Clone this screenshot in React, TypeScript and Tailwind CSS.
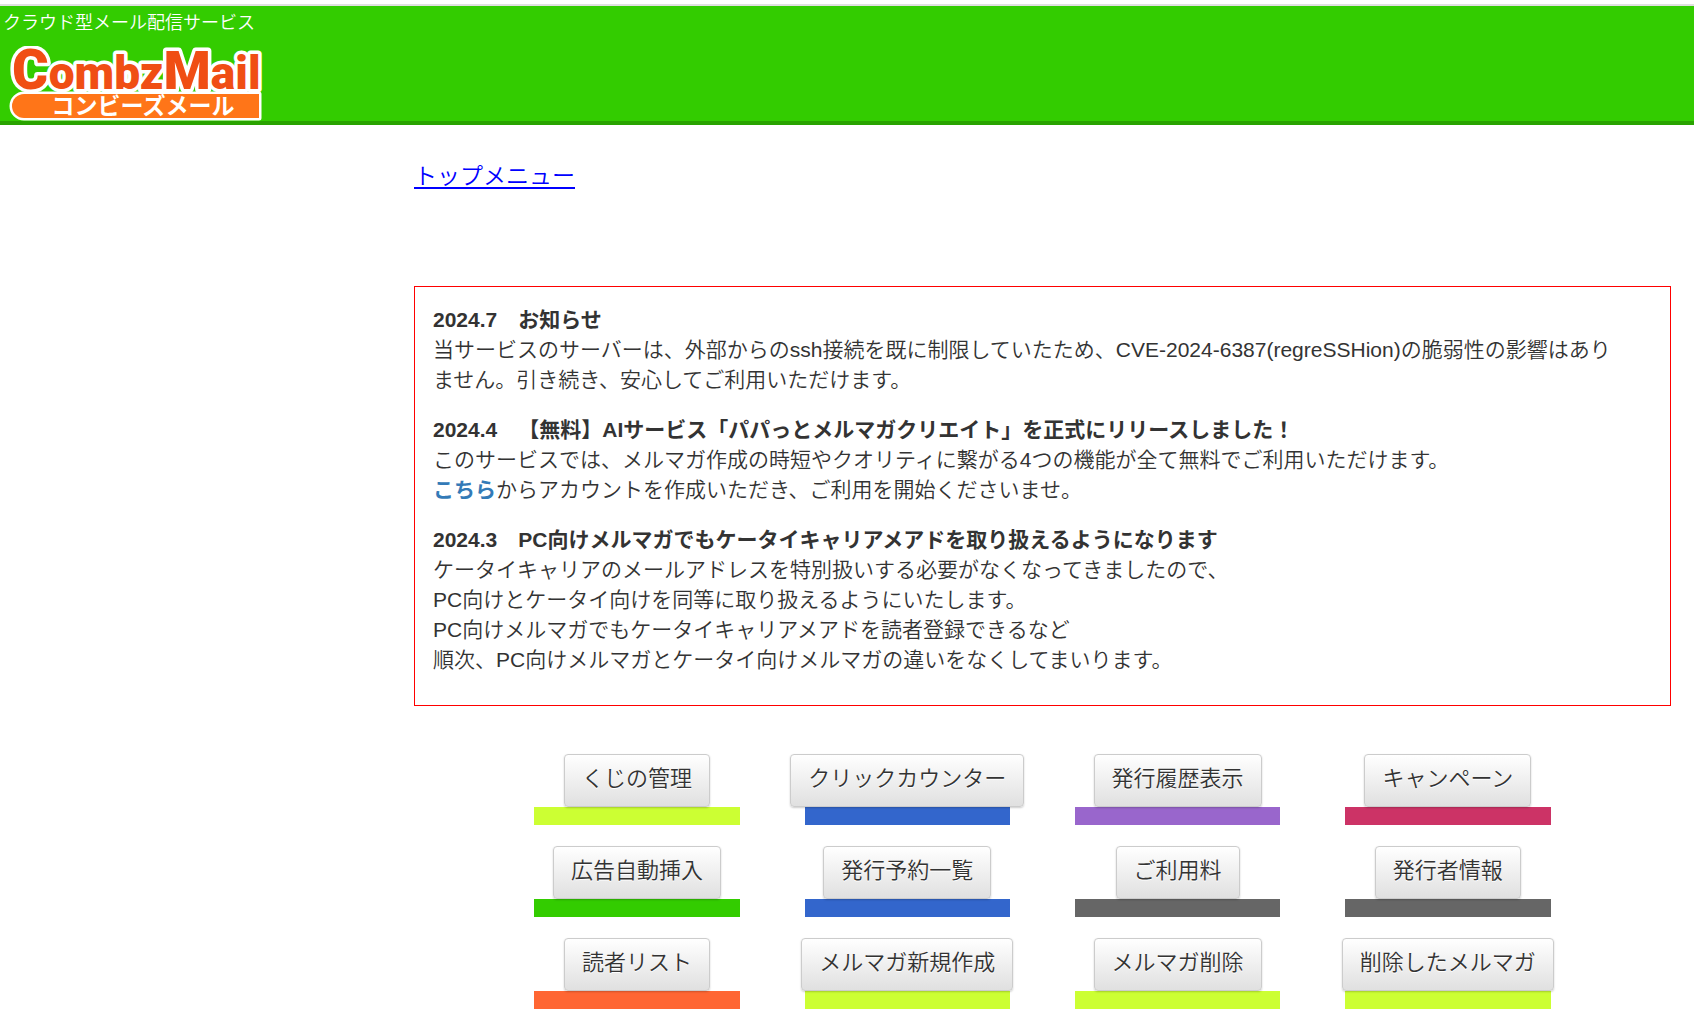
import React from 'react';

type MenuItem = {
  label: string;
  bar: string;
};

const menuItems: MenuItem[] = [
  { label: 'くじの管理', bar: 'bg-[#ccff33]' },
  { label: 'クリックカウンター', bar: 'bg-[#3366cc]' },
  { label: '発行履歴表示', bar: 'bg-[#9966cc]' },
  { label: 'キャンペーン', bar: 'bg-[#cc3366]' },
  { label: '広告自動挿入', bar: 'bg-[#33cc00]' },
  { label: '発行予約一覧', bar: 'bg-[#3366cc]' },
  { label: 'ご利用料', bar: 'bg-[#666666]' },
  { label: '発行者情報', bar: 'bg-[#666666]' },
  { label: '読者リスト', bar: 'bg-[#ff6633]' },
  { label: 'メルマガ新規作成', bar: 'bg-[#ccff33]' },
  { label: 'メルマガ削除', bar: 'bg-[#ccff33]' },
  { label: '削除したメルマガ', bar: 'bg-[#ccff33]' },
];

const Logo: React.FC = () => (
  <svg width="256" height="75" viewBox="0 0 256 75" role="img" aria-label="CombzMail コンビーズメール">
    <text
      x="3"
      y="43"
      fontSize="46"
      fill="#f04e14"
      stroke="#fff"
      strokeWidth="7"
      strokeLinejoin="round"
      paintOrder="stroke"
      className="font-['Roboto',sans-serif] font-black"
    >
      <tspan fontSize="56">C</tspan>ombz<tspan fontSize="54">M</tspan>ail
    </text>
    <path d="M15 48H250V72H15A12 12 0 0 1 15 48Z" fill="#ff7518" stroke="#fff" strokeWidth="5" strokeLinejoin="round" paintOrder="stroke" />
    <text x="134" y="68" textAnchor="middle" fontSize="23" fill="#fff" className="font-['Noto_Sans_CJK_JP',sans-serif] font-bold">
      コンビーズメール
    </text>
  </svg>
);

const Notice: React.FC<{ title: string; children: React.ReactNode }> = ({ title, children }) => (
  <section>
    <h2 className="font-bold leading-[31px]">{title}</h2>
    <p className="leading-[30px]">{children}</p>
  </section>
);

const MenuButton: React.FC<MenuItem> = ({ label, bar }) => (
  <div className="flex flex-col items-center">
    <button
      type="button"
      className="relative h-[53px] whitespace-nowrap rounded border border-[#cccccc] bg-linear-to-b from-white to-[#e0e0e0] px-[17px] pb-1 text-[22px] leading-[30px] shadow-[0_1px_2px_rgba(0,0,0,0.2)] [text-shadow:0_1px_0_#fff]"
    >
      {label}
    </button>
    <div className={`h-[18px] w-[76%] ${bar}`} />
  </div>
);

const App: React.FC = () => (
  <div className="min-h-screen bg-white pt-1 font-['Liberation_Sans','Noto_Sans_CJK_JP',sans-serif] [font-weight:350] text-[#333333] [text-spacing-trim:space-all]">
    <header className="border-t-2 border-b-4 border-t-[#e0e0e0] border-b-[#29a300] bg-[#33cc00]">
      <p className="px-[3px] pt-[5px] text-[18px] leading-6 text-white">クラウド型メール配信サービス</p>
      <div className="pt-[11px] pl-[9px]">
        <a href="#" className="block w-fit">
          <Logo />
        </a>
      </div>
    </header>

    <main className="pr-[23px] pl-[414px]">
      <nav className="pt-[33px]">
        <a href="#" className="text-[23px] leading-9 text-[#0000ff] underline decoration-2 underline-offset-3">
          トップメニュー
        </a>
      </nav>

      <div className="mt-[92px] flex flex-col gap-[19px] border border-[#ff0000] px-[18px] pt-[17px] pb-[30px] text-[21px]">
        <Notice title="2024.7　お知らせ">
          当サービスのサーバーは、外部からのssh接続を既に制限していたため、CVE-2024-6387(regreSSHion)の脆弱性の影響はあり
          <br />
          ません。引き続き、安心してご利用いただけます。
        </Notice>
        <Notice title="2024.4　【無料】AIサービス「パパっとメルマガクリエイト」を正式にリリースしました！">
          このサービスでは、メルマガ作成の時短やクオリティに繋がる4つの機能が全て無料でご利用いただけます。
          <br />
          <a href="#" className="font-bold text-[#337ab7]">こちら</a>からアカウントを作成いただき、ご利用を開始くださいませ。
        </Notice>
        <Notice title="2024.3　PC向けメルマガでもケータイキャリアメアドを取り扱えるようになります">
          ケータイキャリアのメールアドレスを特別扱いする必要がなくなってきましたので、
          <br />
          PC向けとケータイ向けを同等に取り扱えるようにいたします。
          <br />
          PC向けメルマガでもケータイキャリアメアドを読者登録できるなど
          <br />
          順次、PC向けメルマガとケータイ向けメルマガの違いをなくしてまいります。
        </Notice>
      </div>

      <div className="mx-auto mt-12 grid w-[86%] grid-cols-4 gap-y-[21px] pb-3">
        {menuItems.map((item) => (
          <MenuButton key={item.label} {...item} />
        ))}
      </div>
    </main>
  </div>
);

export default App;
